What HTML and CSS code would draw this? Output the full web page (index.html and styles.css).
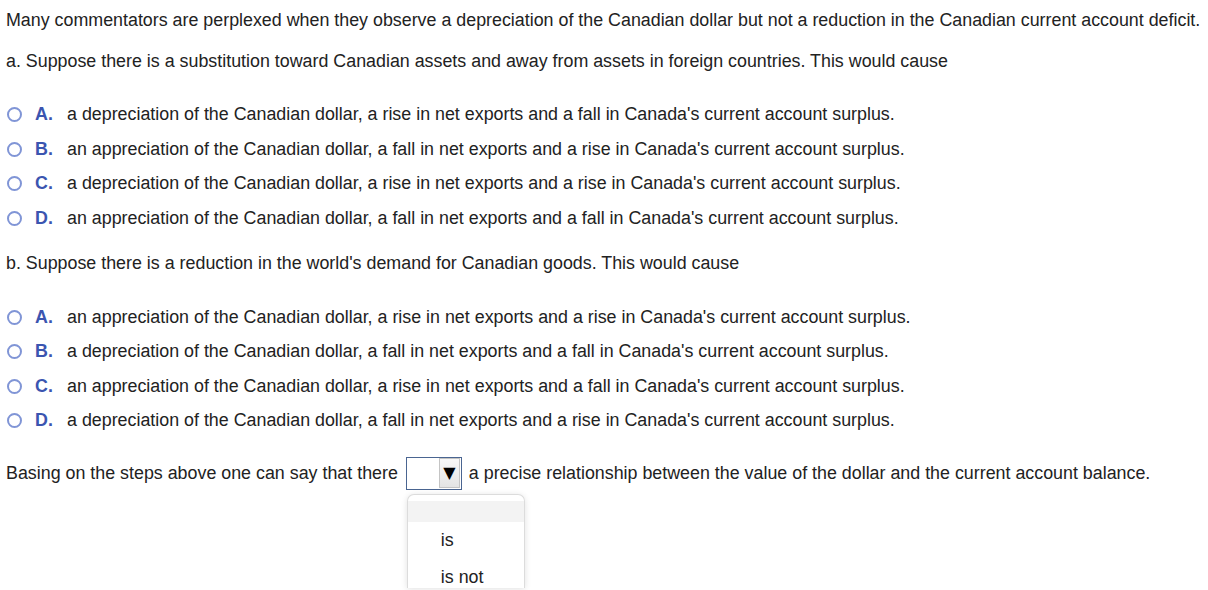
FILE: index.html
```html
<!DOCTYPE html>
<html>
<head>
<meta charset="utf-8">
<link rel="stylesheet" href="styles.css">
</head>
<body>
<div class="page">
  <p class="intro">Many commentators are perplexed when they observe a depreciation of the Canadian dollar but not a reduction in the Canadian current account deficit.</p>
  <p class="question">a. Suppose there is a substitution toward Canadian assets and away from assets in foreign countries. This would cause</p>
  <div class="options">
    <div class="option"><span class="radio"></span><span class="letter">A.</span><span class="text">a depreciation of the Canadian dollar, a rise in net exports and a fall in Canada's current account surplus.</span></div>
    <div class="option"><span class="radio"></span><span class="letter">B.</span><span class="text">an appreciation of the Canadian dollar, a fall in net exports and a rise in Canada's current account surplus.</span></div>
    <div class="option"><span class="radio"></span><span class="letter">C.</span><span class="text">a depreciation of the Canadian dollar, a rise in net exports and a rise in Canada's current account surplus.</span></div>
    <div class="option"><span class="radio"></span><span class="letter">D.</span><span class="text">an appreciation of the Canadian dollar, a fall in net exports and a fall in Canada's current account surplus.</span></div>
  </div>
  <p class="question">b. Suppose there is a reduction in the world's demand for Canadian goods. This would cause</p>
  <div class="options">
    <div class="option"><span class="radio"></span><span class="letter">A.</span><span class="text">an appreciation of the Canadian dollar, a rise in net exports and a rise in Canada's current account surplus.</span></div>
    <div class="option"><span class="radio"></span><span class="letter">B.</span><span class="text">a depreciation of the Canadian dollar, a fall in net exports and a fall in Canada's current account surplus.</span></div>
    <div class="option"><span class="radio"></span><span class="letter">C.</span><span class="text">an appreciation of the Canadian dollar, a rise in net exports and a fall in Canada's current account surplus.</span></div>
    <div class="option"><span class="radio"></span><span class="letter">D.</span><span class="text">a depreciation of the Canadian dollar, a fall in net exports and a rise in Canada's current account surplus.</span></div>
  </div>
  <div class="conclusion">
    <span>Basing on the steps above one can say that there</span>
    <div class="select-wrap">
      <div class="select"><div class="select-btn">&#9660;</div></div>
      <div class="dropdown">
        <div class="dd-item blank"></div>
        <div class="dd-item">is</div>
        <div class="dd-item">is not</div>
      </div>
    </div>
    <span>a precise relationship between the value of the dollar and the current account balance.</span>
  </div>
</div>
</body>
</html>
```
FILE: styles.css
```css
body {
  margin: 0;
  padding: 0;
  background: #ffffff;
}
.page {
  font-family: "Liberation Sans", Arial, sans-serif;
  font-size: 17.85px;
  color: #222222;
  padding: 10px 0 0 6px;
  height: 580px;
}
p {
  margin: 0;
  line-height: 20px;
}
.question {
  margin-top: 21px;
}
.options + .question {
  margin-top: 18px;
}
.options {
  margin-top: 26.8px;
}
.option {
  display: flex;
  align-items: center;
  height: 34.4px;
}
.radio {
  width: 11px;
  height: 11px;
  border: 2px solid #8095d6;
  border-radius: 50%;
  margin-left: 1px;
  flex: none;
}
.letter {
  font-weight: bold;
  color: #3b55b0;
  margin-left: 13px;
  width: 32px;
  flex: none;
}
.text {
  white-space: nowrap;
}
.conclusion {
  display: flex;
  align-items: center;
  height: 33px;
  margin-top: 18.8px;
  white-space: nowrap;
}
.select-wrap {
  position: relative;
  margin: 0 7px 0 8px;
}
.select {
  display: flex;
  align-items: center;
  justify-content: flex-end;
  width: 54px;
  height: 31px;
  border: 1px solid #4a6591;
  box-sizing: content-box;
}
.select-btn {
  width: 21px;
  height: 30px;
  margin-right: 1px;
  border: 1px solid #c4c4c4;
  background: linear-gradient(#f8f8f8, #e4e4e4);
  box-sizing: border-box;
  font-family: "DejaVu Sans", sans-serif;
  font-size: 16px;
  line-height: 27px;
  text-align: center;
  color: #000;
}
.dropdown {
  position: absolute;
  z-index: 10;
  left: 1px;
  top: 37px;
  width: 118px;
  height: 94px;
  border: 1px solid #dcdcdc;
  border-bottom: none;
  border-radius: 7px 7px 0 0;
  background: #fff;
  box-shadow: 0 1px 6px rgba(0,0,0,0.12);
  padding-top: 6px;
  box-sizing: border-box;
  overflow: hidden;
}
.dd-item {
  height: 37px;
  line-height: 37px;
  padding-left: 33px;
}
.dd-item.blank {
  height: 21px;
  background: #f3f3f3;
}
```
